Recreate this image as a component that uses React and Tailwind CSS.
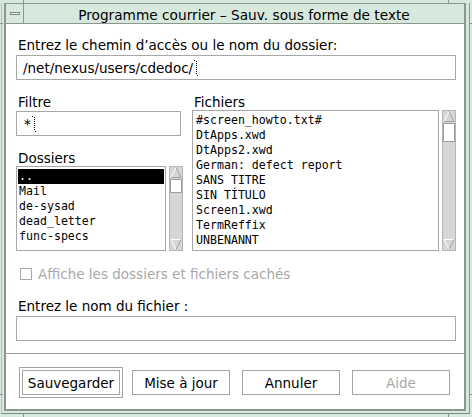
import React from "react";

const dirs = ["..", "Mail", "de-sysad", "dead_letter", "func-specs"];
const files = [
  "#screen_howto.txt#",
  "DtApps.xwd",
  "DtApps2.xwd",
  "German: defect report",
  "SANS TITRE",
  "SIN TÍTULO",
  "Screen1.xwd",
  "TermReffix",
  "UNBENANNT",
];

function Cursor() {
  return (
    <svg width="5" height="16" viewBox="0 0 5 16" className="ml-[1px]">
      <line x1="2.5" y1="1" x2="2.5" y2="15" stroke="#000" strokeDasharray="1 1" />
      <line x1="0" y1="0.5" x2="2" y2="0.5" stroke="#000" strokeDasharray="1 1" />
      <line x1="3" y1="15.5" x2="5" y2="15.5" stroke="#000" strokeDasharray="1 1" />
    </svg>
  );
}

function Arrow({ up }) {
  return (
    <svg width="12" height="11" viewBox="0 0 12 11" className="shrink-0">
      {up ? (
        <>
          <polyline points="1,10.5 6,0.5" fill="none" stroke="#ffffff" />
          <polyline points="6,0.5 11,10.5 1,10.5" fill="none" stroke="#a0a0a0" />
        </>
      ) : (
        <>
          <polyline points="1,0.5 11,0.5" fill="none" stroke="#ffffff" />
          <polyline points="1,0.5 6,10.5" fill="none" stroke="#ffffff" />
          <polyline points="6,10.5 11,0.5" fill="none" stroke="#a0a0a0" />
        </>
      )}
    </svg>
  );
}

function Scrollbar({ thumb }) {
  return (
    <div className="w-[14px] h-full bg-[#d6d6d6] border border-[#b4b4b4] flex flex-col items-center">
      <Arrow up />
      <div className={"w-[12px] bg-white border border-[#9c9c9c] " + thumb} />
      <div className="flex-1" />
      <Arrow />
    </div>
  );
}

function Button({ label, isDefault, disabled }) {
  return (
    <div
      className={
        "w-[104px] h-[31px] flex " +
        (isDefault ? "border border-[#a4a4a4] p-[2px]" : "p-[3px]")
      }
    >
      <div
        className={
          "flex-1 bg-white border border-[#a4a4a4] flex items-center justify-center leading-[16px] " +
          (disabled ? "text-[#a8a8a8]" : "text-black")
        }
      >
        {label}
      </div>
    </div>
  );
}

export default function App() {
  return (
    <div className="w-[472px] h-[417px] bg-[#d7e8dc] relative overflow-hidden flex flex-col pt-[3px] pl-[1px] pr-[2px] pb-[3px] font-['DejaVu_Sans',sans-serif] text-[13.5px] text-black">
      {/* corner resize ticks */}
      <div className="absolute left-[23px] top-0 w-px h-[3px] bg-[#8b968e]" />
      <div className="absolute left-[448px] top-0 w-px h-[3px] bg-[#8b968e]" />
      <div className="absolute left-0 top-[23px] w-[3px] h-px bg-[#8b968e]" />
      <div className="absolute right-0 top-[23px] w-[3px] h-px bg-[#8b968e]" />
      <div className="absolute left-[23px] bottom-0 w-px h-[3px] bg-[#8b968e]" />
      <div className="absolute left-[448px] bottom-0 w-px h-[3px] bg-[#8b968e]" />
      <div className="absolute left-0 top-[394px] w-[3px] h-px bg-[#8b968e]" />
      <div className="absolute right-0 top-[394px] w-[3px] h-px bg-[#8b968e]" />

      <div className="flex-1 flex flex-col border-l border-[#b3c1b7] border-r border-b border-r-[#8b968e] border-b-[#7f8a82] pl-[2px] pr-[3px] pb-[2px]">
        <div className="flex-1 flex flex-col border-t border-[#8b968e] border-l-2 border-r-2 border-b-2">
          {/* title bar */}
          <div className="h-[20px] flex border-b border-[#8b968e] bg-[#d7e8dc]">
            <div className="w-[18px] border-r border-[#8b968e] flex items-center justify-center">
              <div className="w-[10px] h-[3px] border border-[#7c877f] bg-[#eef6f0] mt-[-1px]" />
            </div>
            <div className="flex-1 flex justify-center pt-[3px] text-[13.7px] leading-[16px] whitespace-nowrap">
              Programme courrier – Sauv. sous forme de texte
            </div>
          </div>

          {/* client area */}
          <div className="flex-1 bg-white flex flex-col pt-[13px] pl-[10px] pr-[8px]">
            <div className="leading-[16px] pl-[2px]">
              Entrez le chemin d’accès ou le nom du dossier:
            </div>
            <div className="mt-[2px] h-[25px] border border-[#a8a8a8] flex items-center pl-[6px] leading-[16px]">
              <span>/net/nexus/users/cdedoc/</span>
              <Cursor />
            </div>

            <div className="mt-[14px] flex gap-[9px]">
              <div className="w-[167px] flex flex-col">
                <div className="leading-[16px] pl-[2px]">Filtre</div>
                <div className="mt-[1px] w-[165px] h-[25px] border border-[#a8a8a8] flex items-center pl-[7px] leading-[16px]">
                  <span>*</span>
                  <Cursor />
                </div>
                <div className="mt-[14px] leading-[16px] pl-[2px]">Dossiers</div>
                <div className="h-[85px] flex gap-[3px]">
                  <div className="w-[150px] h-full border border-[#a8a8a8] px-[1px] pt-[2px] font-['DejaVu_Sans_Mono',monospace] text-[11.6px] overflow-hidden">
                    {dirs.map((d, i) => (
                      <div
                        key={d}
                        className={
                          "h-[15px] leading-[15px] pl-[1px] whitespace-pre " +
                          (i === 0 ? "bg-black text-white" : "")
                        }
                      >
                        {d}
                      </div>
                    ))}
                  </div>
                  <Scrollbar thumb="mt-[1px] h-[14px]" />
                </div>
              </div>

              <div className="w-[264px] flex flex-col">
                <div className="leading-[16px] pl-[2px]">Fichiers</div>
                <div className="h-[141px] flex gap-[3px]">
                  <div className="w-[247px] h-full border border-[#a8a8a8] px-[1px] pt-[2px] font-['DejaVu_Sans_Mono',monospace] text-[11.6px] overflow-hidden">
                    {files.map((f) => (
                      <div key={f} className="h-[15px] leading-[15px] pl-[2px] whitespace-pre">
                        {f}
                      </div>
                    ))}
                  </div>
                  <Scrollbar thumb="mt-[1px] h-[19px]" />
                </div>
              </div>
            </div>

            <div className="mt-[15px] flex items-center leading-[16px] pl-[4px]">
              <div className="w-[12px] h-[12px] border border-[#a8a8a8] bg-white" />
              <span className="ml-[6px] text-[#a8a8a8]">
                Affiche les dossiers et fichiers cachés
              </span>
            </div>

            <div className="mt-[16px] leading-[16px] pl-[2px]">Entrez le nom du fichier :</div>
            <div className="mt-[2px] h-[25px] border border-[#a8a8a8]" />

            <div className="mt-[12px] -ml-[10px] -mr-[8px] h-px bg-[#a0a0a0]" />

            <div className="mt-[13px] ml-[3px] flex gap-[6px]">
              <Button label="Sauvegarder" isDefault />
              <Button label="Mise à jour" />
              <Button label="Annuler" />
              <Button label="Aide" disabled />
            </div>
          </div>
        </div>
      </div>
    </div>
  );
}
